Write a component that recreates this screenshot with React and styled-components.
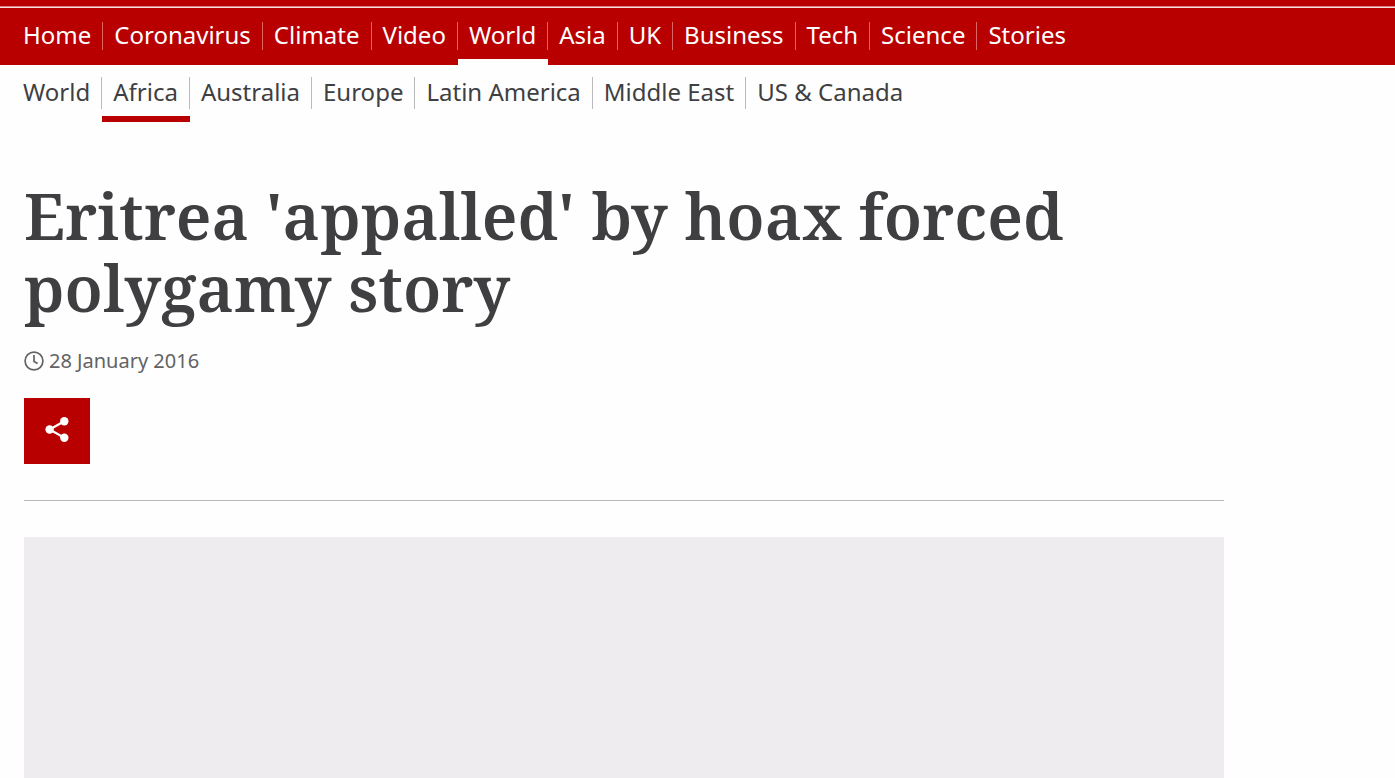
import React from "react";
import styled, { createGlobalStyle } from "styled-components";

const Global = createGlobalStyle`
  * { box-sizing: border-box; }
  body { margin: 0; background: #fefefe; font-family: "Noto Sans", "Open Sans", sans-serif; color: #3f3f42; }
`;

const Page = styled.div`
  min-height: 100vh;
  display: flex;
  flex-direction: column;
`;

const PrimaryBar = styled.nav`
  background: #b80000;
  padding: 6px 12px 0;
`;

const Rule = styled.div`
  height: 2px;
  margin: 0 -12px;
  background: #f6dcdc;
  border-top: 1px solid #d98080;
`;

const Items = styled.ul`
  display: flex;
  list-style: none;
  margin: 0;
  padding: 0;
`;

const Item = styled.li`
  height: 57px;
  padding-top: ${(p) => (p.$secondary ? 12 : 14)}px;
  border-bottom: 6px solid ${(p) => (p.$active ? (p.$secondary ? "#b80000" : "#fefefe") : "transparent")};
`;

const NavLink = styled.a`
  display: block;
  padding: 0 11px 2px;
  font-size: 24px;
  line-height: ${(p) => (p.$secondary ? 30 : 26)}px;
  text-decoration: none;
  white-space: nowrap;
  color: ${(p) => (p.$secondary ? "#3f3f42" : "#fff")};
  border-right: 1px solid ${(p) => (p.$secondary ? "#bababa" : "#e06666")};
  ${Item}:last-child & { border-right: 0; }
`;

const SecondaryBar = styled.nav`
  padding: 0 12px;
`;

const Article = styled.main`
  display: flex;
  flex-direction: column;
  flex: 1;
  align-items: flex-start;
  width: 100%;
  max-width: 1248px;
  padding: 58px 24px 0;
`;

const Headline = styled.h1`
  margin: 0;
  font-family: "Noto Serif", "DejaVu Serif", serif;
  font-size: 64px;
  font-weight: 600;
  line-height: 72px;
`;

const Dateline = styled.div`
  display: flex;
  align-items: center;
  gap: 5px;
  margin-top: 23px;
  font-size: 20px;
  line-height: 28px;
  color: #636366;
`;

const ShareButton = styled.button`
  display: grid;
  place-items: center;
  width: 66px;
  height: 66px;
  margin-top: 23px;
  padding: 0;
  border: 0;
  background: #b80000;
`;

const Divider = styled.hr`
  width: 100%;
  margin: 36px 0;
  border: 0;
  border-top: 1px solid #bababa;
`;

const MediaPlaceholder = styled.div`
  width: 100%;
  flex: 1;
  background: #eeecee;
`;

const sections = ["Home", "Coronavirus", "Climate", "Video", "World", "Asia", "UK", "Business", "Tech", "Science", "Stories"];
const regions = ["World", "Africa", "Australia", "Europe", "Latin America", "Middle East", "US & Canada"];

function NavItems({ names, active, secondary }) {
  return (
    <Items>
      {names.map((name) => (
        <Item key={name} $active={name === active} $secondary={secondary}>
          <NavLink href="#" $secondary={secondary}>{name}</NavLink>
        </Item>
      ))}
    </Items>
  );
}

export default function App() {
  return (
    <Page>
      <Global />
      <PrimaryBar aria-label="News sections">
        <Rule />
        <NavItems names={sections} active="World" />
      </PrimaryBar>
      <SecondaryBar aria-label="World regions">
        <NavItems names={regions} active="Africa" secondary />
      </SecondaryBar>
      <Article>
        <Headline>Eritrea 'appalled' by hoax forced polygamy story</Headline>
        <Dateline>
          <svg width="20" height="20" viewBox="0 0 20 20" fill="none" stroke="#636366" strokeWidth="1.7" aria-hidden="true">
            <circle cx="10" cy="10" r="8.9" />
            <path d="M10 4V10.4L13.6 12.6" />
          </svg>
          <time dateTime="2016-01-28">28 January 2016</time>
        </Dateline>
        <ShareButton type="button" aria-label="Share">
          <svg width="26" height="28" viewBox="0 0 26 28" fill="#fff" aria-hidden="true">
            <path d="M20.3 4.2L5.6 12.5L20.3 20.8" fill="none" stroke="#fff" strokeWidth="2.2" />
            <circle cx="20.3" cy="4.2" r="4.2" />
            <circle cx="5.6" cy="12.5" r="4.2" />
            <circle cx="20.3" cy="20.8" r="4.2" />
          </svg>
        </ShareButton>
        <Divider />
        <MediaPlaceholder />
      </Article>
    </Page>
  );
}
